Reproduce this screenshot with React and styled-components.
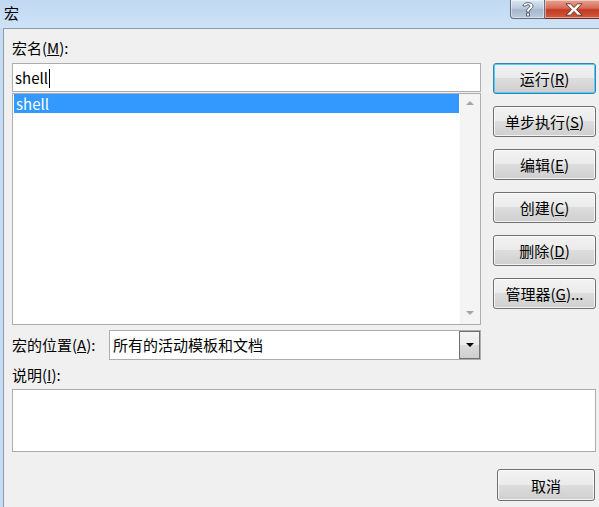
import React from 'react';
import styled, { createGlobalStyle } from 'styled-components';

const GlobalStyle = createGlobalStyle`
  html, body {
    margin: 0;
    padding: 0;
    width: 599px;
    height: 507px;
    overflow: hidden;
    background: #f0f0f0;
  }
  * {
    box-sizing: border-box;
  }
`;

const FONT = `"Noto Sans CJK SC", "Noto Sans", sans-serif`;

const Window = styled.div`
  width: 599px;
  height: 507px;
  display: flex;
  flex-direction: column;
  font-family: ${FONT};
  font-size: 15px;
  color: #000;
  background: #c6dcf3;
`;

const TitleBar = styled.div`
  height: 28px;
  display: flex;
  align-items: flex-start;
  background: linear-gradient(#c0d8f2, #cfe3f7);
`;

const TitleText = styled.div`
  padding: 3px 0 0 4px;
  line-height: 20px;
  font-size: 15px;
`;

const CaptionButtons = styled.div`
  margin-left: auto;
  display: flex;
  height: 19px;
  margin-right: -4px;
`;

const CaptionButton = styled.div`
  width: ${p => p.$w}px;
  height: 19px;
  display: flex;
  align-items: center;
  justify-content: center;
  border: 1px solid ${p => (p.$close ? '#6d2a22' : '#5e6f84')};
  border-top: none;
  border-left-width: ${p => (p.$close ? 0 : 1)}px;
  border-radius: ${p => (p.$close ? '0 0 4px 0' : '0 0 0 4px')};
  background: ${p =>
    p.$close
      ? 'linear-gradient(#e8a493 0%, #d56b55 45%, #c23a24 55%, #d35a3c 100%)'
      : 'linear-gradient(#dbe6f2 0%, #bccbdc 45%, #a6b8cd 55%, #b9cadc 100%)'};
  box-shadow: inset 0 0 0 1px rgba(255, 255, 255, 0.45);
`;

const Frame = styled.div`
  flex: 1;
  display: flex;
  padding-left: 3px;
`;

const Client = styled.div`
  flex: 1;
  display: flex;
  flex-direction: column;
  background: #f0f0f0;
  border-top: 1px solid #8c9aab;
  border-left: 1px solid #8c9aab;
  padding: 9px 3px 0 8px;
`;

const TopRow = styled.div`
  display: flex;
  gap: 12px;
`;

const LeftColumn = styled.div`
  width: 469px;
  display: flex;
  flex-direction: column;
`;

const Label = styled.div`
  height: 20px;
  line-height: 20px;
  white-space: nowrap;
  margin-top: ${p => p.$mt || 0}px;
`;

const TextBox = styled.div`
  height: 29px;
  margin-top: 5px;
  border: 1px solid #abadb3;
  background: #fff;
  padding: 0 0 0 2px;
  line-height: 27px;
`;

const Caret = styled.span`
  display: inline-block;
  width: 1px;
  height: 19px;
  background: #000;
  vertical-align: middle;
  margin-left: 1px;
  margin-top: -2px;
`;

const ListBox = styled.div`
  margin-top: 1px;
  height: 232px;
  border: 1px solid #abadb3;
  background: #fff;
  display: flex;
  padding-left: 1px;
`;

const ListItems = styled.div`
  flex: 1;
`;

const ListItem = styled.div`
  height: 19px;
  line-height: 19px;
  padding-left: 2px;
  background: ${p => (p.$selected ? '#3399ff' : 'transparent')};
  color: ${p => (p.$selected ? '#fff' : '#000')};
`;

const ScrollBar = styled.div`
  width: 21px;
  display: flex;
  flex-direction: column;
  justify-content: space-between;
  align-items: center;
  background: #f4f4f4;
  border-left: 1px solid #fbfbfb;
  padding: 7px 0 9px;
`;

const Arrow = styled.div`
  width: 0;
  height: 0;
  border-left: 4px solid transparent;
  border-right: 4px solid transparent;
  ${p =>
    p.$up
      ? `border-bottom: 4px solid ${p.$color || '#a6a6a6'};`
      : `border-top: 4px solid ${p.$color || '#a6a6a6'};`}
`;

const ButtonColumn = styled.div`
  display: flex;
  flex-direction: column;
  gap: 12px;
  margin-top: 25px;
`;

const Button = styled.button`
  width: ${p => p.$w || 103}px;
  height: ${p => p.$h || 31}px;
  padding: 0;
  border: 1px solid ${p => (p.$default ? '#3c7fb1' : '#707070')};
  border-radius: 3px;
  background: linear-gradient(#f2f2f2 0%, #ebebeb 49%, #dddddd 50%, #cfcfcf 100%);
  box-shadow: inset 0 0 0 1px ${p => (p.$default ? '#4fd0f5' : 'rgba(255, 255, 255, 0.75)')};
  font-family: ${FONT};
  font-size: 15px;
  color: #000;
  line-height: 1;
`;

const LocationRow = styled.div`
  display: flex;
  align-items: center;
  margin-top: 5px;
  width: 469px;
`;

const LocationLabel = styled(Label)`
  width: 97px;
`;

const ComboBox = styled.div`
  flex: 1;
  height: 30px;
  border: 1px solid #abadb3;
  background: #fff;
  display: flex;
  align-items: stretch;
  padding-left: 3px;
`;

const ComboText = styled.div`
  flex: 1;
  line-height: 28px;
`;

const ComboButton = styled.div`
  width: 21px;
  display: flex;
  align-items: center;
  justify-content: center;
  border: 1px solid #707070;
  background: linear-gradient(#f4f4f4 0%, #ececec 49%, #dcdcdc 50%, #cfcfcf 100%);
`;

const DescBox = styled.div`
  margin-top: 4px;
  height: 63px;
  border: 1px solid #abadb3;
  background: #fff;
`;

const Footer = styled.div`
  display: flex;
  justify-content: flex-end;
  margin-top: 17px;
  padding-right: 1px;
`;

const Mnemonic = ({ children }) => <u>{children}</u>;

const buttons = [
  { text: '运行', key: 'R', isDefault: true },
  { text: '单步执行', key: 'S' },
  { text: '编辑', key: 'E' },
  { text: '创建', key: 'C' },
  { text: '删除', key: 'D' },
  { text: '管理器', key: 'G', suffix: '...' },
];

export default function App() {
  return (
    <>
      <GlobalStyle />
      <Window>
        <TitleBar>
          <TitleText>宏</TitleText>
          <CaptionButtons>
            <CaptionButton $w={35}>
              <svg width="12" height="16" viewBox="0 0 12 16">
                <path
                  d="M1 5 C1 0.5 11 0.5 11 5 C11 8 7.5 8 7.5 10.3 L7.5 11 L4.5 11 L4.5 9.8 C4.5 7 8 7 8 5 C8 3.3 4 3.3 4 5 Z M4.5 12 L7.5 12 L7.5 15 L4.5 15 Z"
                  fill="#fff"
                  stroke="#4a5868"
                  strokeWidth="0.9"
                />
              </svg>
            </CaptionButton>
            <CaptionButton $w={58} $close>
              <svg width="18" height="13" viewBox="0 0 18 13">
                <path
                  d="M1 0.8 L5.5 0.8 L9 4.6 L12.5 0.8 L17 0.8 L11.4 6.5 L17 12.2 L12.5 12.2 L9 8.4 L5.5 12.2 L1 12.2 L6.6 6.5 Z"
                  fill="#fff"
                  stroke="#5a2a22"
                  strokeWidth="0.9"
                  strokeLinejoin="round"
                />
              </svg>
            </CaptionButton>
          </CaptionButtons>
        </TitleBar>
        <Frame>
          <Client>
            <TopRow>
              <LeftColumn>
                <Label>
                  宏名(<Mnemonic>M</Mnemonic>):
                </Label>
                <TextBox>
                  shell
                  <Caret />
                </TextBox>
                <ListBox>
                  <ListItems>
                    <ListItem $selected>shell</ListItem>
                  </ListItems>
                  <ScrollBar>
                    <Arrow $up />
                    <Arrow />
                  </ScrollBar>
                </ListBox>
              </LeftColumn>
              <ButtonColumn>
                {buttons.map(b => (
                  <Button key={b.key} $default={b.isDefault}>
                    {b.text}(<Mnemonic>{b.key}</Mnemonic>){b.suffix || ''}
                  </Button>
                ))}
              </ButtonColumn>
            </TopRow>
            <LocationRow>
              <LocationLabel>
                宏的位置(<Mnemonic>A</Mnemonic>):
              </LocationLabel>
              <ComboBox>
                <ComboText>所有的活动模板和文档</ComboText>
                <ComboButton>
                  <Arrow $color="#000" />
                </ComboButton>
              </ComboBox>
            </LocationRow>
            <Label $mt={5}>
              说明(<Mnemonic>I</Mnemonic>):
            </Label>
            <DescBox />
            <Footer>
              <Button $w={98} $h={32}>
                取消
              </Button>
            </Footer>
          </Client>
        </Frame>
      </Window>
    </>
  );
}
